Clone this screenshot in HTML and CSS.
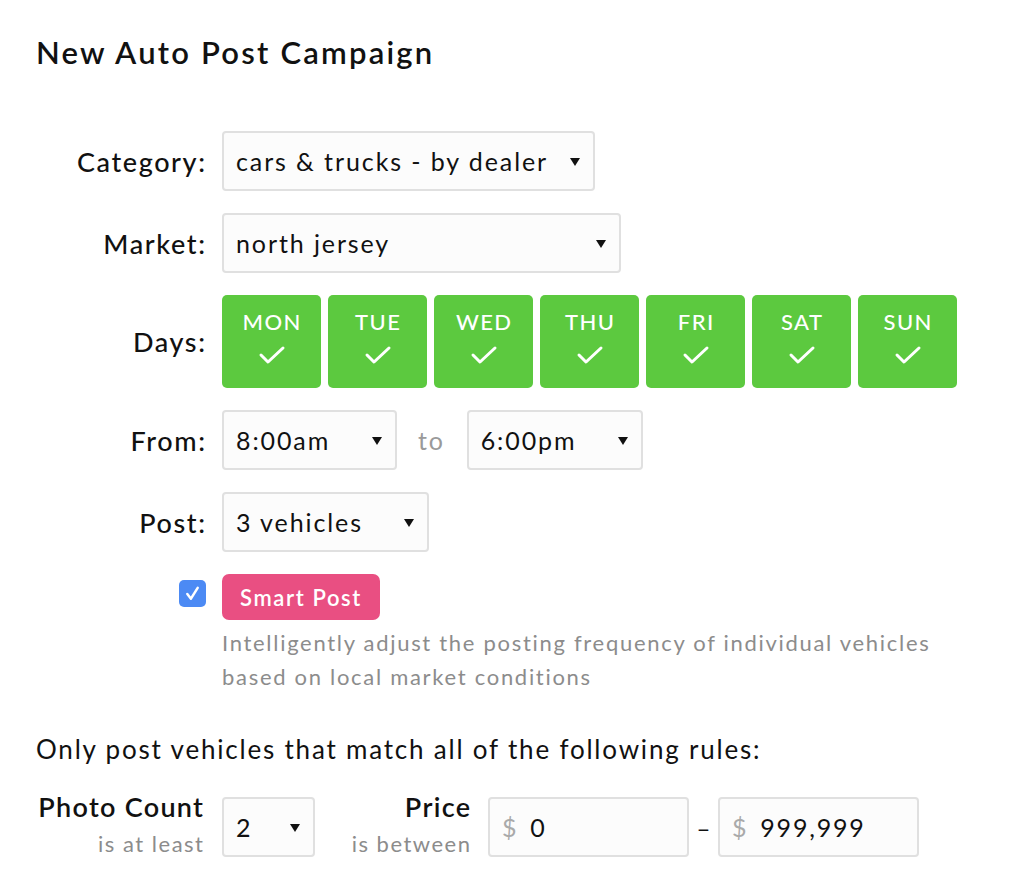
FILE: index.html
```html
<!DOCTYPE html>
<html>
<head>
<meta charset="utf-8">
<link rel="stylesheet" href="styles.css">
</head>
<body>
<div class="page">
  <h1 class="title">New Auto Post Campaign</h1>
  <div class="form">
    <div class="label">Category:</div>
    <div class="control"><div class="select w-category"><span>cars &amp; trucks - by dealer</span><i class="caret"></i></div></div>

    <div class="label">Market:</div>
    <div class="control"><div class="select w-market"><span>north jersey</span><i class="caret"></i></div></div>

    <div class="label">Days:</div>
    <div class="control days">
      <div class="day"><span>MON</span><svg viewBox="0 0 28 20"><polyline points="3,10 10,17 25,3"/></svg></div>
      <div class="day"><span>TUE</span><svg viewBox="0 0 28 20"><polyline points="3,10 10,17 25,3"/></svg></div>
      <div class="day"><span>WED</span><svg viewBox="0 0 28 20"><polyline points="3,10 10,17 25,3"/></svg></div>
      <div class="day"><span>THU</span><svg viewBox="0 0 28 20"><polyline points="3,10 10,17 25,3"/></svg></div>
      <div class="day"><span>FRI</span><svg viewBox="0 0 28 20"><polyline points="3,10 10,17 25,3"/></svg></div>
      <div class="day"><span>SAT</span><svg viewBox="0 0 28 20"><polyline points="3,10 10,17 25,3"/></svg></div>
      <div class="day"><span>SUN</span><svg viewBox="0 0 28 20"><polyline points="3,10 10,17 25,3"/></svg></div>
    </div>

    <div class="label">From:</div>
    <div class="control time">
      <div class="select w-time1"><span>8:00am</span><i class="caret"></i></div>
      <span class="to">to</span>
      <div class="select w-time2"><span>6:00pm</span><i class="caret"></i></div>
    </div>

    <div class="label">Post:</div>
    <div class="control"><div class="select w-post"><span>3 vehicles</span><i class="caret"></i></div></div>

    <div class="label check-cell"><span class="checkbox"><svg viewBox="0 0 26 26"><polyline points="8,13.5 11.5,18 18,7.5"/></svg></span></div>
    <div class="control smart">
      <span class="pill">Smart Post</span>
      <p class="desc">Intelligently adjust the posting frequency of individual vehicles based on local market conditions</p>
    </div>
  </div>

  <p class="rules">Only post vehicles that match all of the following rules:</p>

  <div class="filters">
    <div class="flabel photo"><div class="fmain">Photo Count</div><div class="fsub">is at least</div></div>
    <div class="select w-count"><span>2</span><i class="caret"></i></div>
    <div class="flabel price"><div class="fmain">Price</div><div class="fsub">is between</div></div>
    <div class="input"><span class="cur">$</span><span>0</span></div>
    <span class="dash">–</span>
    <div class="input"><span class="cur">$</span><span>999,999</span></div>
  </div>
</div>
</body>
</html>
```

FILE: styles.css
```css
html, body {
  margin: 0;
  padding: 0;
  background: #ffffff;
}

body {
  font-family: Lato, "Open Sans", "Liberation Sans", sans-serif;
  color: #111111;
}

.page {
  padding: 30px 36px 0 36px;
}

.title {
  margin: 0;
  font-size: 31px;
  font-weight: 600;
  line-height: 44px;
  letter-spacing: 2.2px;
}

.form {
  margin-top: 57px;
  display: grid;
  grid-template-columns: 169px auto;
  column-gap: 17px;
  row-gap: 22px;
  align-items: center;
}

.label {
  text-align: right;
  font-size: 27px;
  font-weight: 500;
  letter-spacing: 1.6px;
  margin-right: -1.6px;
}

.control {
  display: flex;
  align-items: center;
}

.select {
  box-sizing: border-box;
  height: 60px;
  border: 2px solid #e0e0e0;
  border-radius: 4px;
  background: #fcfcfc;
  display: flex;
  align-items: center;
  justify-content: space-between;
  padding: 0 13px 0 12px;
  font-size: 25px;
  letter-spacing: 1.9px;
}

.caret {
  width: 0;
  height: 0;
  border-left: 5.5px solid transparent;
  border-right: 5.5px solid transparent;
  border-top: 8px solid #111111;
  margin-top: 2px;
}

.w-category { width: 373px; }
.w-market { width: 399px; }
.w-time1 { width: 175px; }
.w-time2 { width: 176px; }
.w-post { width: 207px; }
.w-count { width: 93px; }

.days {
  gap: 7px;
}

.day {
  box-sizing: border-box;
  width: 99px;
  height: 93px;
  border-radius: 5px;
  background: #5cc93f;
  color: #ffffff;
  display: flex;
  flex-direction: column;
  align-items: center;
  padding-top: 14px;
}

.day span {
  font-size: 22px;
  font-weight: 500;
  line-height: 26px;
  letter-spacing: 1.4px;
  margin-right: -1.4px;
}

.day svg {
  width: 28px;
  height: 20px;
  margin-top: 10px;
  fill: none;
  stroke: #ffffff;
  stroke-width: 3;
  stroke-linecap: round;
  stroke-linejoin: round;
}

.time .to {
  color: #9a9a9a;
  font-size: 25px;
  letter-spacing: 1.8px;
  margin: 0 22px 0 21px;
}

.check-cell {
  align-self: start;
  display: flex;
  justify-content: flex-end;
  padding-top: 6px;
  padding-right: 1px;
}

.checkbox {
  width: 27px;
  height: 27px;
  border-radius: 5px;
  background: #4c8af4;
  display: block;
}

.checkbox svg {
  width: 27px;
  height: 27px;
  display: block;
  fill: none;
  stroke: #ffffff;
  stroke-width: 2.4;
  stroke-linecap: round;
  stroke-linejoin: round;
}

.smart {
  flex-direction: column;
  align-items: flex-start;
}

.pill {
  box-sizing: border-box;
  height: 46px;
  width: 158px;
  justify-content: center;
  border-radius: 7px;
  background: #e94f82;
  color: #ffffff;
  font-size: 22px;
  font-weight: 600;
  letter-spacing: 1.6px;
  display: flex;
  align-items: center;
}

.desc {
  margin: 6px 0 0 0;
  width: 730px;
  color: #8c8c8c;
  font-size: 22px;
  line-height: 34px;
  letter-spacing: 1.7px;
}

.rules {
  margin: 40px 0 0 0;
  font-size: 26px;
  line-height: 30px;
  letter-spacing: 1.8px;
}

.filters {
  margin-top: 26px;
  display: flex;
  align-items: center;
}

.flabel {
  text-align: right;
}

.fmain {
  font-size: 27px;
  font-weight: 600;
  line-height: 34px;
  letter-spacing: 1.3px;
  margin-right: -1.3px;
}

.fsub {
  font-size: 22px;
  color: #8c8c8c;
  line-height: 40px;
  letter-spacing: 1.5px;
  margin-right: -1.5px;
}

.photo {
  width: 167px;
  margin-right: 19px;
}

.price {
  width: 155px;
  margin-left: 0;
  margin-right: 18px;
}

.input {
  box-sizing: border-box;
  width: 201px;
  height: 60px;
  border: 2px solid #e0e0e0;
  border-radius: 4px;
  background: #fcfcfc;
  display: flex;
  align-items: center;
  padding-left: 12px;
  font-size: 25px;
  letter-spacing: 1.8px;
}

.input .cur {
  color: #aaaaaa;
  margin-right: 12px;
}

.dash {
  font-size: 24px;
  width: 29px;
  text-align: center;
}
```
